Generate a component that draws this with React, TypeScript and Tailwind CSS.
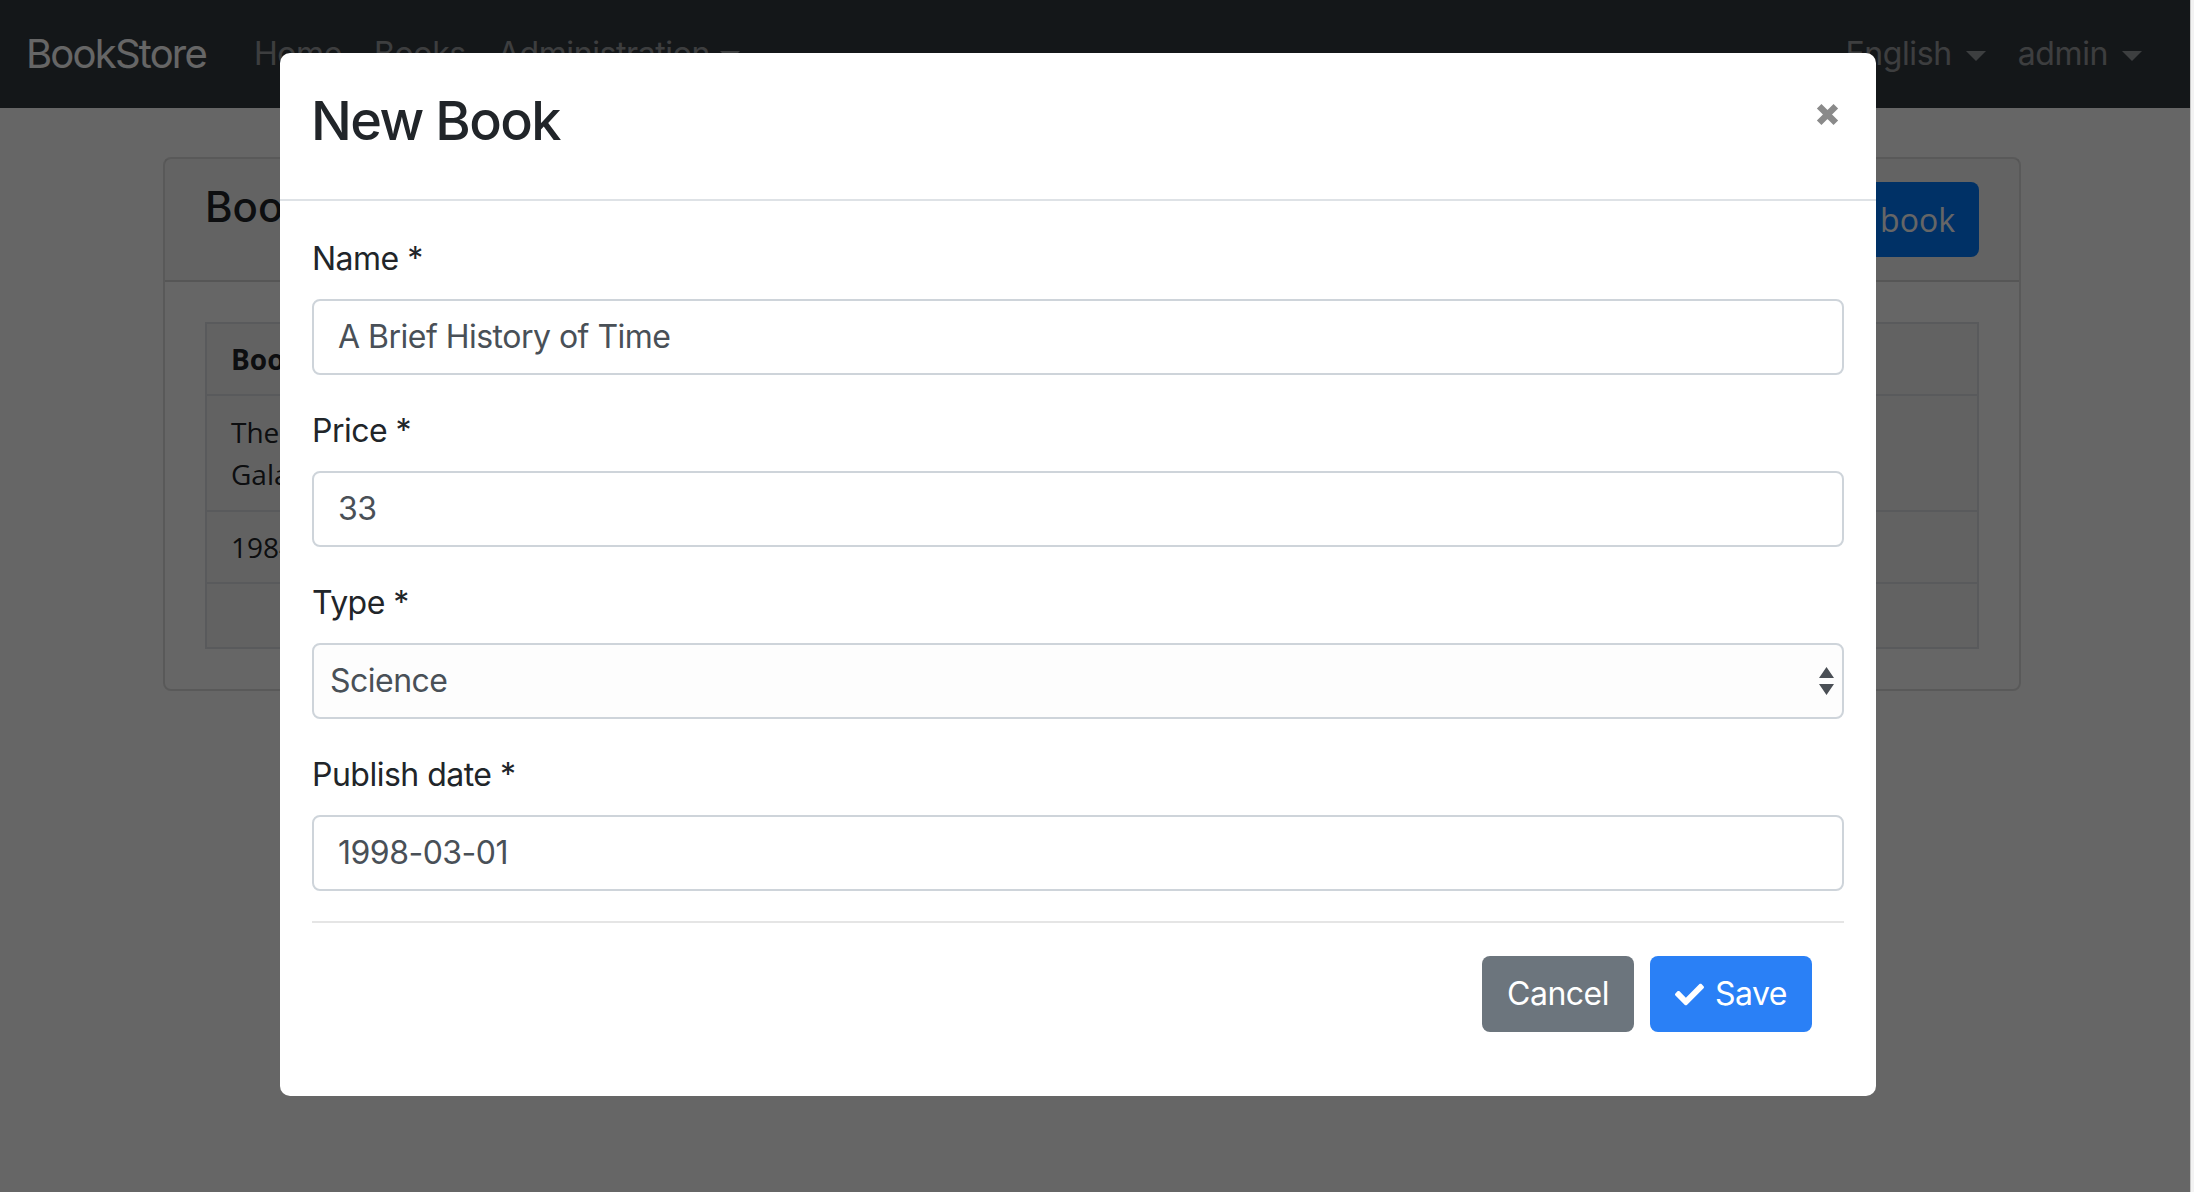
import { FaCheck } from "react-icons/fa";

const sans = "font-['Inter','Liberation_Sans',sans-serif]";
const page = "font-['Open_Sans','Liberation_Sans',sans-serif]";

function Caret({ className = "" }: { className?: string }) {
    return (
        <span
            className={`inline-block w-0 h-0 border-t-[10px] border-t-current border-x-[10px] border-x-transparent ${className}`}
        />
    );
}

function Navbar() {
    return (
        <nav className={`h-[108px] bg-[#343a40] flex items-center pl-[26px] pr-[32px] ${sans} tracking-[-0.025em]`}>
            <span className="text-[40px] text-white mr-[32px] tracking-[-0.045em]">BookStore</span>
            <div className="flex items-center text-[32px] text-white/50">
                <span className="px-4">Home</span>
                <span className="px-4">Books</span>
                <span className="px-4 flex items-center gap-[10px]">
                    Administration <Caret className="mt-[4px]" />
                </span>
            </div>
            <div className="ml-auto flex items-center text-[32px] text-white/50">
                <span className="px-4 flex items-center gap-[14px]">
                    English <Caret className="mt-[4px]" />
                </span>
                <span className="px-4 flex items-center gap-[14px]">
                    admin <Caret className="mt-[4px]" />
                </span>
            </div>
        </nav>
    );
}

function BooksCard() {
    const rows: { name: React.ReactNode; pad: string }[] = [
        { name: <>The Hitchhiker's Guide to the<br />Galaxy</>, pad: "py-[15px]" },
        { name: "1984", pad: "py-[14px]" },
    ];
    return (
        <div className={`ml-[163px] mt-[49px] w-[1858px] border-2 border-black/[0.125] rounded-[8px] ${page}`}>
            <div className="flex justify-between items-start px-[40px] py-[23px] bg-black/[0.03] border-b-2 border-black/[0.125]">
                <h5 className={`text-[42px] font-medium leading-[1.2] text-[#212529] ${sans}`}>Books</h5>
                <button className="h-[75px] px-6 rounded-[8px] bg-[#007bff] text-white text-[32px]">
                    New book
                </button>
            </div>
            <div className="p-[40px]">
                <table className="w-full border-2 border-[#dee2e6] bg-[#f6f6f6] text-[28px] leading-[42px] text-[#212529] border-collapse whitespace-nowrap">
                    <thead>
                        <tr>
                            <th className="border-2 border-[#dee2e6] px-6 py-[14px] text-left font-bold w-[520px]">Book Name</th>
                            <th className="border-2 border-[#dee2e6] px-6 py-[14px] text-left font-bold">Type</th>
                            <th className="border-2 border-[#dee2e6] px-6 py-[14px] text-left font-bold">Publish Date</th>
                            <th className="border-2 border-[#dee2e6] px-6 py-[14px] text-left font-bold">Price</th>
                        </tr>
                    </thead>
                    <tbody>
                        {rows.map((r, i) => (
                            <tr key={i}>
                                <td className={`border-2 border-[#dee2e6] px-6 ${r.pad} align-top`}>{r.name}</td>
                                <td className={`border-2 border-[#dee2e6] px-6 ${r.pad}`}></td>
                                <td className={`border-2 border-[#dee2e6] px-6 ${r.pad}`}></td>
                                <td className={`border-2 border-[#dee2e6] px-6 ${r.pad}`}></td>
                            </tr>
                        ))}
                        <tr>
                            <td colSpan={4} className="border-2 border-[#dee2e6] h-[65px]"></td>
                        </tr>
                    </tbody>
                </table>
            </div>
        </div>
    );
}

function Field({ label, children, last = false }: { label: string; children: React.ReactNode; last?: boolean }) {
    return (
        <div className={last ? "" : "mb-[32px]"}>
            <label className="block text-[32px] leading-[48px] mb-[16px] text-[#212529]">{label}</label>
            {children}
        </div>
    );
}

function TextBox({ value }: { value: string }) {
    return (
        <div className="h-[76px] border-2 border-[#ced4da] rounded-[8px] px-[24px] flex items-center text-[32px] text-[#495057] bg-white">
            {value}
        </div>
    );
}

function NewBookModal() {
    return (
        <div className={`w-[1596px] bg-white rounded-[10px] ${sans} tracking-[-0.032em]`}>
            <div className="h-[148px] border-b-2 border-[#dee2e6] flex justify-between items-start pl-[31px] pr-[36px]">
                <h3 className="text-[54px] leading-[1.2] font-medium text-[#212529] mt-[36px] tracking-[-0.03em]">New Book</h3>
                <svg viewBox="0 0 24 24" className="w-[25px] h-[25px] mt-[49px]">
                    <path d="M4 4 L20 20 M20 4 L4 20" stroke="#8a8a8a" strokeWidth="6.2" strokeLinecap="butt" />
                </svg>
            </div>
            <div className="px-[32px] pt-[34px] pb-[32px]">
                <Field label="Name *">
                    <TextBox value="A Brief History of Time" />
                </Field>
                <Field label="Price *">
                    <TextBox value="33" />
                </Field>
                <Field label="Type *">
                    <div className="h-[76px] border-2 border-[#ced4da] rounded-[8px] pl-[16px] pr-[8px] flex items-center justify-between text-[32px] text-[#495057] bg-[#fdfdfd]">
                        <span>Science</span>
                        <svg viewBox="0 0 15 28" className="w-[15px] h-[28px]">
                            <path d="M7.5 0 L15 11 L0 11 Z M0 17 L15 17 L7.5 28 Z" fill="#4a4f55" />
                        </svg>
                    </div>
                </Field>
                <Field label="Publish date *" last>
                    <TextBox value="1998-03-01" />
                </Field>
                <div className="mt-[30px] border-t-2 border-black/10" />
                <div className="flex justify-end gap-[16px] pr-[32px] pt-[33px] pb-[32px]">
                    <button className="w-[152px] h-[76px] rounded-[8px] bg-[#6c757d] text-white text-[32px]">
                        Cancel
                    </button>
                    <button className="w-[162px] h-[76px] rounded-[8px] bg-[#2a80f6] text-white text-[32px] flex items-center justify-center gap-[11px]">
                        <FaCheck className="w-[29px] h-[29px]" />
                        Save
                    </button>
                </div>
            </div>
        </div>
    );
}

export default function App() {
    return (
        <div className="w-[2194px] h-[1192px] flex overflow-hidden bg-white">
            <div className="relative w-[2190px] h-full">
                <Navbar />
                <BooksCard />
                <div className="absolute inset-0 bg-black/60" />
                <div className="absolute inset-0 pl-[280px] pt-[53px]">
                    <NewBookModal />
                </div>
            </div>
            <div className="w-[4px] h-full border-l border-[#c9c9c9] bg-[#f3f3f3]" />
        </div>
    );
}
